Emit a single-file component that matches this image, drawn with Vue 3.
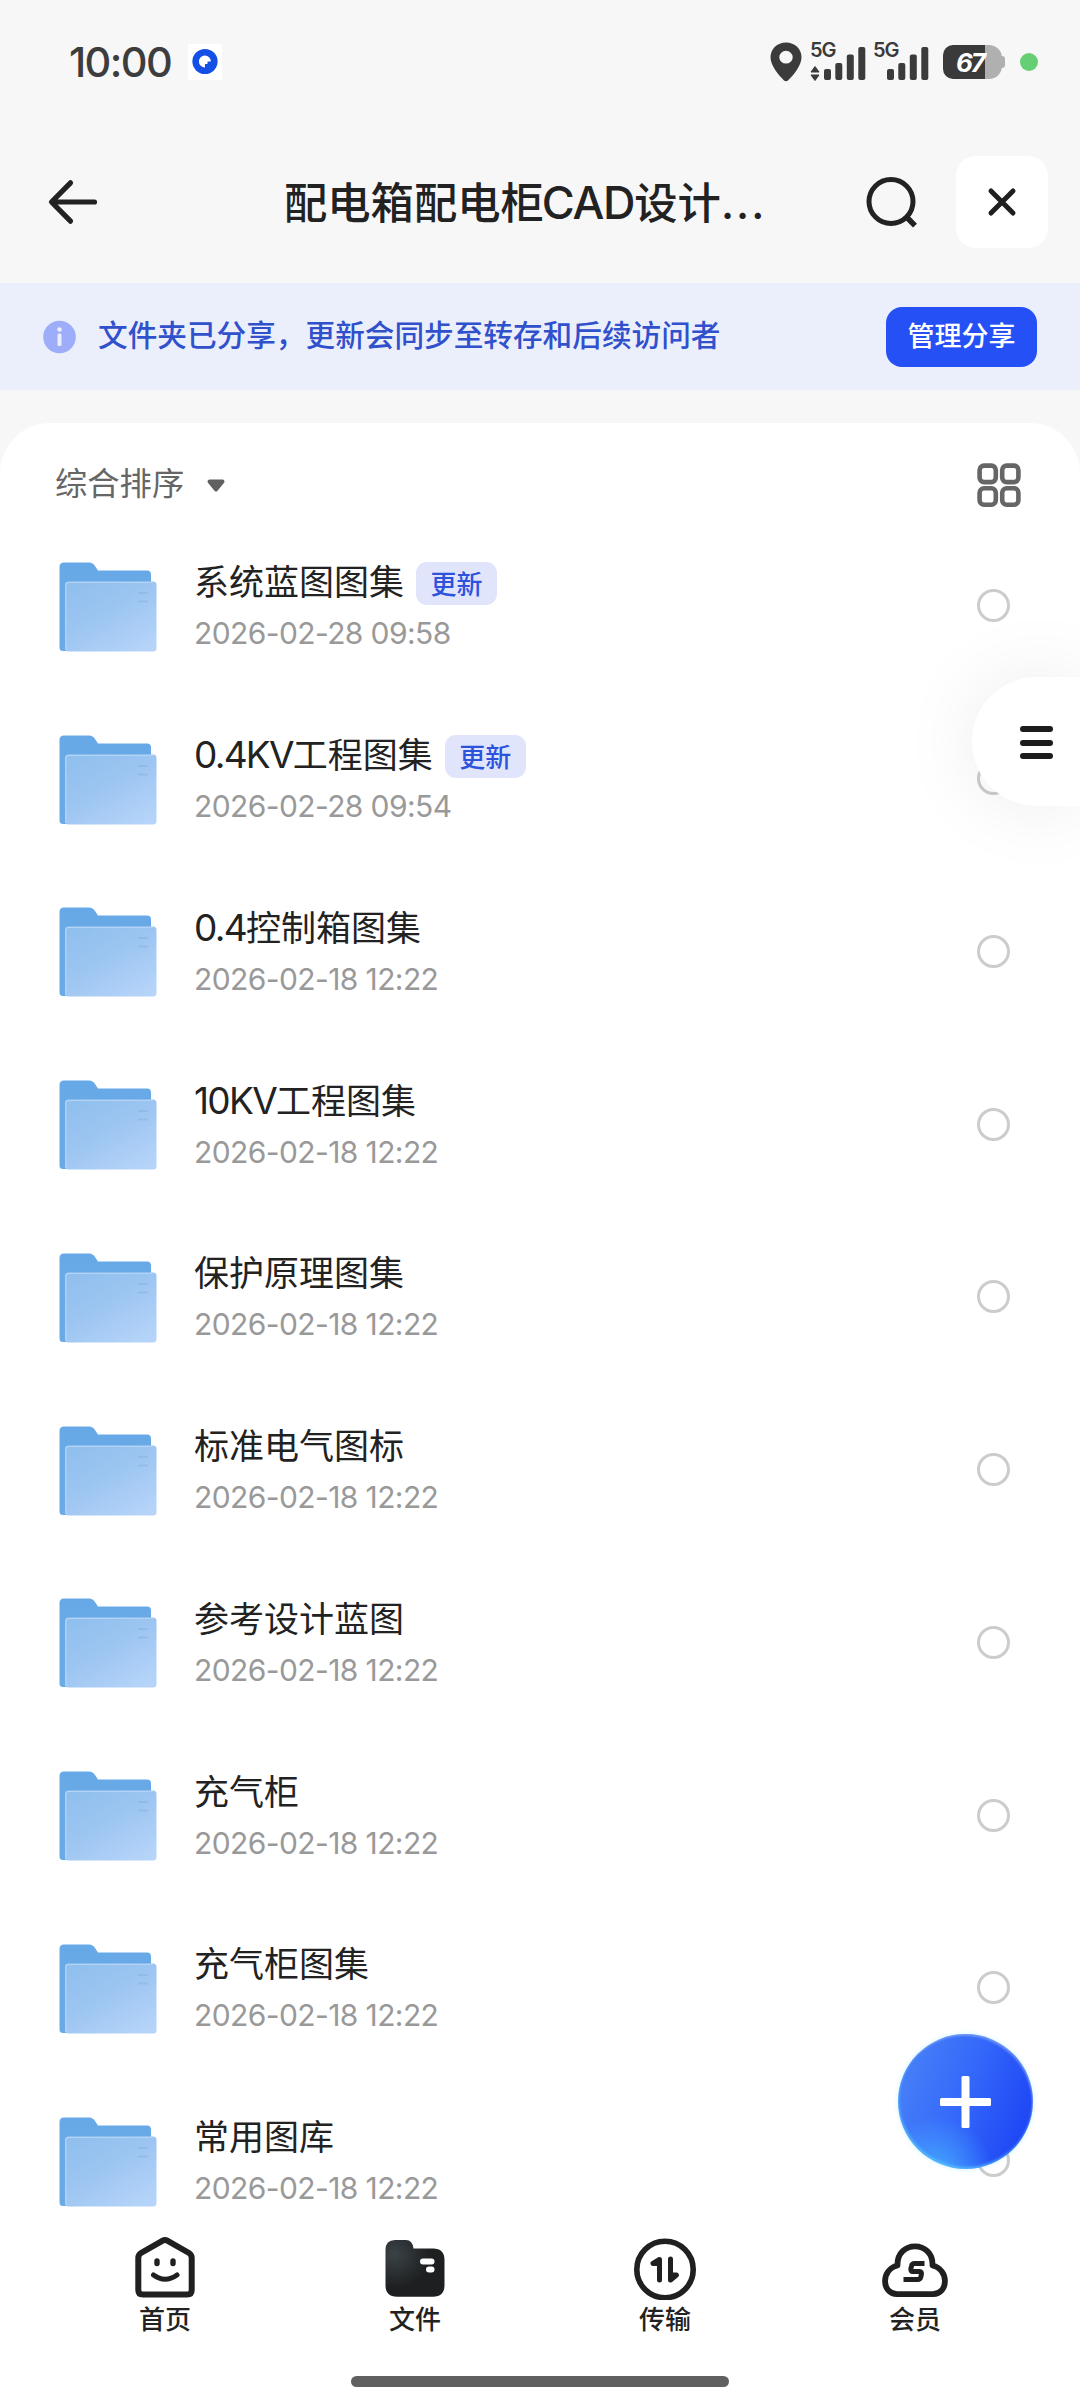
<script setup>
const folders = [
  { latin: '', name: '系统蓝图图集', date: '2026-02-28 09:58', updated: true },
  { latin: '0.4KV', name: '工程图集', date: '2026-02-28 09:54', updated: true },
  { latin: '0.4', name: '控制箱图集', date: '2026-02-18 12:22' },
  { latin: '10KV', name: '工程图集', date: '2026-02-18 12:22' },
  { latin: '', name: '保护原理图集', date: '2026-02-18 12:22' },
  { latin: '', name: '标准电气图标', date: '2026-02-18 12:22' },
  { latin: '', name: '参考设计蓝图', date: '2026-02-18 12:22' },
  { latin: '', name: '充气柜', date: '2026-02-18 12:22' },
  { latin: '', name: '充气柜图集', date: '2026-02-18 12:22' },
  { latin: '', name: '常用图库', date: '2026-02-18 12:22' },
]
</script>

<template>
  <div class="screen">
    <svg class="defs" width="0" height="0" aria-hidden="true">
      <defs>
        <linearGradient id="folderBack" x1="0" y1="0" x2="0" y2="1">
          <stop offset="0" stop-color="#67a9e6" />
          <stop offset="1" stop-color="#6aabe6" />
        </linearGradient>
        <linearGradient id="folderFront" x1="0.1" y1="0" x2="0.85" y2="1">
          <stop offset="0" stop-color="#90bfee" />
          <stop offset="0.45" stop-color="#9cc5f1" />
          <stop offset="1" stop-color="#b6d4f9" />
        </linearGradient>
        <radialGradient id="tabFolder" cx="0.15" cy="0.25" r="0.6">
          <stop offset="0" stop-color="#3a4347" />
          <stop offset="1" stop-color="#1e1f20" />
        </radialGradient>
      </defs>
    </svg>

    <header class="status">
      <span class="time">10:00</span>
      <span class="app-mark">
        <svg width="34" height="36" viewBox="0 0 34 36">
          <circle cx="17" cy="17.500" r="12.600" fill="#1450e6" />
          <path d="M17 23.400a6 6 0 1 1 5.900-6h-3.400v2.600H17z" fill="#fff" />
        </svg>
      </span>
      <svg class="pin" width="32" height="40" viewBox="0 0 32 42" preserveAspectRatio="none">
        <path fill-rule="evenodd" fill="#3b3b3b" d="M16 0.500C7 .5.5 7.300.5 16 .5 25 9 35 14 40.400q2 1.500 4 0C23 35 31.500 25 31.500 16 31.500 7.300 25 .5 16 .5zM16 9.300a6.700 6.700 0 1 1 0 13.400a6.700 6.700 0 0 1 0-13.400z" />
      </svg>
      <div class="signal">
        <span>5G</span>
        <svg width="56" height="38" viewBox="0 0 56 38" fill="#3b3b3b">
          <path d="M5 23.500l4 5.500H1zM5 37.500l4-5.500H1z" stroke="#3b3b3b" stroke-width="1" stroke-linejoin="round" />
          <rect x="14" y="26" width="7" height="11" rx="2" />
          <rect x="25.300" y="20" width="7" height="17" rx="2" />
          <rect x="36.800" y="11.500" width="7" height="25.500" rx="2" />
          <rect x="48.300" y="4" width="7" height="33" rx="2" />
        </svg>
      </div>
      <div class="signal second">
        <span>5G</span>
        <svg width="56" height="38" viewBox="0 0 56 38" fill="#3b3b3b">
          <rect x="14" y="26" width="7" height="11" rx="2" />
          <rect x="25.300" y="20" width="7" height="17" rx="2" />
          <rect x="36.800" y="11.500" width="7" height="25.500" rx="2" />
          <rect x="48.300" y="4" width="7" height="33" rx="2" />
        </svg>
      </div>
      <div class="battery"><span class="level">67</span></div>
      <span class="dot"></span>
    </header>

    <nav class="titlebar">
      <svg class="back" width="52" height="50" viewBox="0 0 52 50" fill="none" stroke="#222" stroke-width="5.200" stroke-linecap="round" stroke-linejoin="round">
        <path d="M23.500 5.800L4.500 25l19 19.200M5 25h42.500" />
      </svg>
      <h1><span>配电箱配电柜</span><span class="cad">CAD</span><span>设计</span><span class="more">...</span></h1>
      <svg class="search" width="54" height="54" viewBox="0 0 54 54" fill="none" stroke="#222" stroke-width="5">
        <circle cx="25" cy="26.500" r="22" />
        <path d="M40.500 42l8.500 8.700" stroke-width="5.500" />
      </svg>
      <button class="close" type="button">
        <svg width="30" height="30" viewBox="0 0 30 30" stroke="#1f1f1f" stroke-width="5" stroke-linecap="round">
          <path d="M4 4l22 22M26 4L4 26" />
        </svg>
      </button>
    </nav>

    <section class="notice">
      <svg width="34" height="34" viewBox="0 0 34 34">
        <circle cx="16.500" cy="17" r="16.300" fill="#9dadf9" />
        <circle cx="16.500" cy="9.500" r="2.300" fill="#ebeefc" />
        <rect x="14.500" y="13.500" width="4" height="12.500" rx="1.500" fill="#ebeefc" />
      </svg>
      <p>文件夹已分享，更新会同步至转存和后续访问者</p>
      <button class="manage" type="button"><span>管理分享</span></button>
    </section>

    <main class="panel">
      <div class="sort">
        <span class="sort-label">综合排序</span>
        <svg class="caret" width="20" height="14" viewBox="0 0 20 14">
          <path d="M3.500 2.500h13L10 10.500z" fill="#606060" stroke="#606060" stroke-width="4" stroke-linejoin="round" />
        </svg>
        <svg class="grid" width="44" height="45" viewBox="0 0 44 45" fill="none" stroke="#666" stroke-width="4.600">
          <rect x="2.600" y="2.600" width="16.200" height="16.500" rx="4.500" />
          <rect x="25.200" y="2.600" width="16.200" height="16.500" rx="4.500" />
          <rect x="2.600" y="25.300" width="16.200" height="16.500" rx="4.500" />
          <rect x="25.200" y="25.300" width="16.200" height="16.500" rx="4.500" />
        </svg>
      </div>

      <ul class="list">
        <li v-for="(f, i) in folders" :key="i" class="row">
          <svg class="folder" width="98" height="90" viewBox="0 0 98 90">
            <path fill="url(#folderBack)" d="M5 .5h25q4 0 6 3.500l3 4.500h49q4 0 4 4V89H4q-3.500 0-3.500-3.500V5Q.5.5 5 .5z" />
            <path fill="#fff" d="M92 18h6v71h-6z" />
            <rect x="6" y="19.500" width="91.500" height="70" rx="3.500" fill="url(#folderFront)" />
            <path d="M6.800 88V23q0-2.700 2.700-2.700H94" fill="none" stroke="#b3d3f5" stroke-width="1.300" />
            <path d="M79 31h10M79 39.500h10" stroke="#85b1e6" stroke-width="2" opacity=".5" />
          </svg>
          <div class="info">
            <div class="name">
              <span v-if="f.latin" class="latin">{{ f.latin }}</span>
              <span>{{ f.name }}</span>
              <span v-if="f.updated" class="badge">更新</span>
            </div>
            <div class="date">{{ f.date }}</div>
          </div>
          <span class="radio"></span>
        </li>
      </ul>
    </main>

    <footer class="tabs">
      <div class="tab">
        <svg width="66" height="66" viewBox="0 0 66 66" fill="none" stroke="#202020" stroke-width="6" stroke-linecap="round" stroke-linejoin="round">
          <path d="M30.300 6.800q2.700-1.500 5.400 0L57 19q2.700 1.600 2.700 5v32q0 4.500-4.500 4.500H10.800q-4.500 0-4.500-4.500V24q0-3.400 2.700-5z" />
          <path d="M21.500 41q11.500 8.500 23.500 0" stroke-width="5" />
          <path d="M25 27v2.500M41 27v2.500" stroke-width="5.400" />
        </svg>
        <span>首页</span>
      </div>
      <div class="tab">
        <svg width="66" height="66" viewBox="0 0 66 66">
          <path fill="url(#tabFolder)" d="M13 6h11q6.500 0 7.500 8.500H51q11.500 0 11.500 11.500v25Q62.500 62.700 51 62.700H15Q3.500 62.700 3.500 51V16Q3.500 6 13 6z" />
          <rect x="38" y="24.500" width="14.500" height="6" rx="3" fill="#fff" />
          <rect x="44" y="32.500" width="8.500" height="6" rx="3" fill="#fff" />
        </svg>
        <span>文件</span>
      </div>
      <div class="tab">
        <svg width="66" height="66" viewBox="0 0 66 66" fill="none" stroke="#202020" stroke-linecap="round" stroke-linejoin="round">
          <circle cx="33" cy="35.500" r="28.200" stroke-width="5.600" />
          <path d="M27.500 46V25.500L21 29.500h6M38.500 25v21l6-5h-6" stroke-width="5" fill="#202020" />
        </svg>
        <span>传输</span>
      </div>
      <div class="tab">
        <svg width="66" height="66" viewBox="0 0 66 66" fill="none" stroke="#202020" stroke-width="5.800">
          <path d="M15 60.200C-.5 60-1.500 35.500 15.500 31.500C14.500 6 51.500 6 50.500 31.500C67.500 35.500 66.500 60 51 60.200z" stroke-linejoin="round" />
          <path d="M42.500 29.500H32.500q-2.500 0-3 2.500l-.6 2.500q-.5 3 2 3h6.500q2.500 0 2 2.800l-.6 2.700q-.6 2.500-3 2.500H21.500" stroke-width="5" />
        </svg>
        <span>会员</span>
      </div>
    </footer>
    <div class="home-indicator"></div>

    <button class="menu" type="button"><i></i><i></i><i></i></button>
    <button class="fab" type="button">
      <svg width="52" height="52" viewBox="0 0 52 52" fill="#fff">
        <rect x="0" y="22" width="51" height="8" rx="1.500" />
        <rect x="21.500" y="0" width="8" height="52" rx="1.500" />
      </svg>
    </button>
  </div>
</template>

<style>
body {
  margin: 0;
  background: #fff;
}
</style>

<style scoped>
* {
  box-sizing: border-box;
}
.screen {
  position: relative;
  width: 1080px;
  height: 2403px;
  overflow: hidden;
  background: #f7f7f7;
  color: #222;
  font-family: "Noto Sans CJK SC", sans-serif;
  display: flex;
  flex-direction: column;
}
.defs {
  position: absolute;
}
button {
  border: 0;
  padding: 0;
  font-family: inherit;
}
svg {
  display: block;
  flex: none;
}

.status {
  flex: none;
  height: 123px;
  display: flex;
  align-items: center;
  padding-left: 69px;
}
.time {
  width: 119px;
  font: 500 41.500px/50px Inter, sans-serif;
  letter-spacing: -1.600px;
  color: #3d3d3d;
}
.app-mark {
  width: 34px;
  height: 36px;
  background: #fff;
}
.pin {
  margin-left: auto;
  margin-right: 8px;
}
.signal {
  position: relative;
  margin-right: 7px;
}
.signal span {
  position: absolute;
  left: 0;
  top: -1px;
  font: 600 20px/16px Inter, sans-serif;
  letter-spacing: -1px;
  color: #3b3b3b;
}
.signal.second {
  margin-right: 14px;
}
.battery {
  position: relative;
  width: 59px;
  height: 34px;
  border-radius: 10px 13px 13px 10px;
  background: linear-gradient(90deg, #3a3a3a 42px, #b0b0b0 42px);
}
.battery::after {
  content: "";
  position: absolute;
  right: -3px;
  top: 11px;
  width: 7px;
  height: 12px;
  border-radius: 3px;
  background: #b0b0b0;
}
.level {
  display: block;
  padding-left: 13px;
  font: italic 700 26px/35px Inter, sans-serif;
  letter-spacing: -2px;
  color: #fff;
}
.dot {
  width: 18px;
  height: 18px;
  border-radius: 50%;
  background: #66cf73;
  margin: 0 42px 0 18px;
}

.titlebar {
  flex: none;
  height: 160px;
  display: flex;
  align-items: center;
  padding: 0 32px 3px 47px;
}
.titlebar h1 {
  display: flex;
  align-items: baseline;
  margin: 0 0 0 185px;
  width: 579px;
  font-size: 43.300px;
  line-height: 60px;
  font-weight: 500;
  white-space: nowrap;
}
.cad {
  margin-left: -2px;
  font-family: Inter, sans-serif;
  font-size: 45px;
  letter-spacing: -1.300px;
}
.more {
  font-family: Inter, sans-serif;
  letter-spacing: 2px;
}
.search {
  margin-left: 3px;
}
.close {
  margin-left: auto;
  width: 92px;
  height: 92px;
  border-radius: 20px;
  background: #fff;
  display: flex;
  align-items: center;
  justify-content: center;
}

.notice {
  flex: none;
  height: 107px;
  display: flex;
  align-items: center;
  padding: 0 43px;
  background: #ebeefb;
}
.notice p {
  margin: 0 0 5px 21px;
  font-size: 29.650px;
  line-height: 44px;
  font-weight: 500;
  color: #3050cc;
  white-space: nowrap;
}
.manage {
  margin-left: auto;
  width: 151px;
  height: 60px;
  border-radius: 16px;
  background: #2450f5;
  color: #fff;
  font-size: 27px;
  line-height: 40px;
  font-weight: 500;
}
.manage span {
  display: block;
  margin-bottom: 4px;
}

.panel {
  flex: none;
  margin-top: 33px;
  height: 1789px;
  border-radius: 50px 50px 0 0;
  background: #fff;
  overflow: hidden;
}
.sort {
  height: 97px;
  display: flex;
  align-items: center;
  padding: 27px 59px 0 55px;
}
.sort-label {
  margin-bottom: 8px;
  font-size: 32.300px;
  line-height: 44px;
  color: #666;
}
.caret {
  margin: 1px 0 0 22px;
}
.grid {
  margin-left: auto;
}
.list {
  margin: 0;
  padding: 0;
  list-style: none;
}
.row {
  height: 172.750px;
  display: flex;
  align-items: center;
  padding: 0 70px 0 59px;
}
.folder {
  margin-top: 1px;
}
.info {
  margin: 0 0 0 37px;
}
.name {
  display: flex;
  align-items: baseline;
  height: 52px;
  font-size: 35px;
  line-height: 50px;
  white-space: nowrap;
}
.latin {
  font-family: Inter, sans-serif;
  font-size: 37px;
  letter-spacing: -1.700px;
}
.badge {
  align-self: center;
  margin: 4px 0 0 12px;
  width: 81px;
  height: 43px;
  border-radius: 11px;
  background: #e0e5fc;
  color: #2d52dc;
  font-size: 26px;
  line-height: 42px;
  font-weight: 500;
  text-align: center;
}
.date {
  height: 50px;
  font: 400 30px/52px Inter, sans-serif;
  letter-spacing: -0.600px;
  color: #999;
}
.radio {
  margin: 0 0 1px auto;
  width: 33px;
  height: 33px;
  border: 3px solid #ccc;
  border-radius: 50%;
}

.tabs {
  flex: none;
  height: 164px;
  display: flex;
  padding: 22px 40px 0;
  background: #fff;
}
.tab {
  flex: 1;
  display: flex;
  flex-direction: column;
  align-items: center;
  font-size: 26px;
  line-height: 36px;
  font-weight: 500;
}
.home-indicator {
  flex: 1;
  background: #fff;
  display: flex;
}
.home-indicator::before {
  content: "";
  margin-left: 351px;
  width: 378px;
  height: 11px;
  border-radius: 6px;
  background: #606060;
}

.menu {
  position: absolute;
  right: 0;
  top: 677px;
  width: 108px;
  height: 129px;
  border-radius: 65px 0 0 65px;
  background: #fff;
  box-shadow: 0 0 80px rgba(0, 0, 0, 0.08);
  display: flex;
  flex-direction: column;
  justify-content: center;
  gap: 7.500px;
  padding: 2px 0 0 48px;
}
.menu i {
  width: 33px;
  height: 6px;
  border-radius: 3px;
  background: #1c1c1c;
}
.fab {
  position: absolute;
  left: 898px;
  top: 2034px;
  width: 135px;
  height: 135px;
  border-radius: 50%;
  display: flex;
  align-items: center;
  justify-content: center;
  background:
    radial-gradient(circle at 28% 104%, rgba(73, 180, 255, 0.85) 0, rgba(73, 160, 255, 0) 34%),
    linear-gradient(110deg, #467ff8 10%, #3468fa 48%, #2049f5 85%);
  box-shadow: inset -1px 2px 2px rgba(130, 165, 245, 0.7), inset 1px -2px 3px rgba(90, 205, 255, 0.7), 0 0 5px rgba(110, 220, 255, 0.35);
}
</style>
